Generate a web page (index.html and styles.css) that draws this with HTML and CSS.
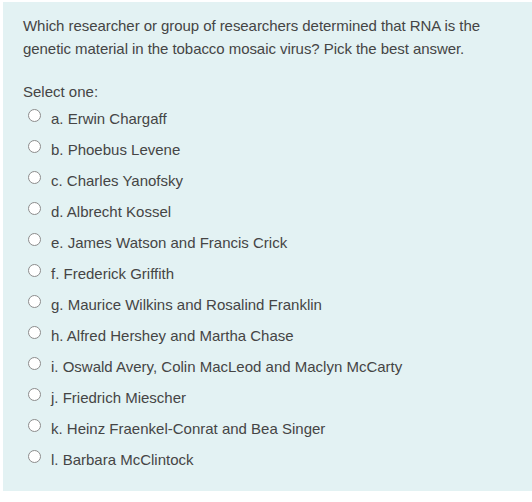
FILE: index.html
```html
<!DOCTYPE html>
<html>
<head>
<meta charset="utf-8">
<link rel="stylesheet" href="styles.css">
</head>
<body>
<div class="que">
  <p class="qtext">Which researcher or group of researchers determined that RNA is the genetic material in the tobacco mosaic virus? Pick the best answer.</p>
  <div class="prompt">Select one:</div>
  <div class="answers">
    <label class="opt"><input type="radio" name="q"><span>a. Erwin Chargaff</span></label>
    <label class="opt"><input type="radio" name="q"><span>b. Phoebus Levene</span></label>
    <label class="opt"><input type="radio" name="q"><span>c. Charles Yanofsky</span></label>
    <label class="opt"><input type="radio" name="q"><span>d. Albrecht Kossel</span></label>
    <label class="opt"><input type="radio" name="q"><span>e. James Watson and Francis Crick</span></label>
    <label class="opt"><input type="radio" name="q"><span>f. Frederick Griffith</span></label>
    <label class="opt"><input type="radio" name="q"><span>g. Maurice Wilkins and Rosalind Franklin</span></label>
    <label class="opt"><input type="radio" name="q"><span>h. Alfred Hershey and Martha Chase</span></label>
    <label class="opt"><input type="radio" name="q"><span>i. Oswald Avery, Colin MacLeod and Maclyn McCarty</span></label>
    <label class="opt"><input type="radio" name="q"><span>j. Friedrich Miescher</span></label>
    <label class="opt"><input type="radio" name="q"><span>k. Heinz Fraenkel-Conrat and Bea Singer</span></label>
    <label class="opt"><input type="radio" name="q"><span>l. Barbara McClintock</span></label>
  </div>
</div>
</body>
</html>
```

FILE: styles.css
```css
html, body {
  margin: 0;
  padding: 0;
  background: #ffffff;
}
body {
  font-family: "Liberation Sans", Arial, sans-serif;
  font-size: 15px;
  color: #454545;
}
.que {
  margin: 2px 0 0 3px;
  background: #e3f2f3;
  padding: 12px 20px 16px 20px;
}
.qtext {
  margin: 0 0 20px 0;
  line-height: 23px;
  letter-spacing: -0.06px;
}
.prompt {
  line-height: 23px;
}
.answers {
  display: flex;
  flex-direction: column;
  padding-left: 5px;
}
.opt {
  display: flex;
  align-items: flex-start;
  height: 31px;
  line-height: 31px;
}
.opt input {
  appearance: none;
  -webkit-appearance: none;
  box-sizing: border-box;
  width: 13px;
  height: 13px;
  margin: 6px 10px 0 0;
  border: 1px solid #8c8c8c;
  border-radius: 50%;
  background: #ffffff;
  flex: none;
}
```
